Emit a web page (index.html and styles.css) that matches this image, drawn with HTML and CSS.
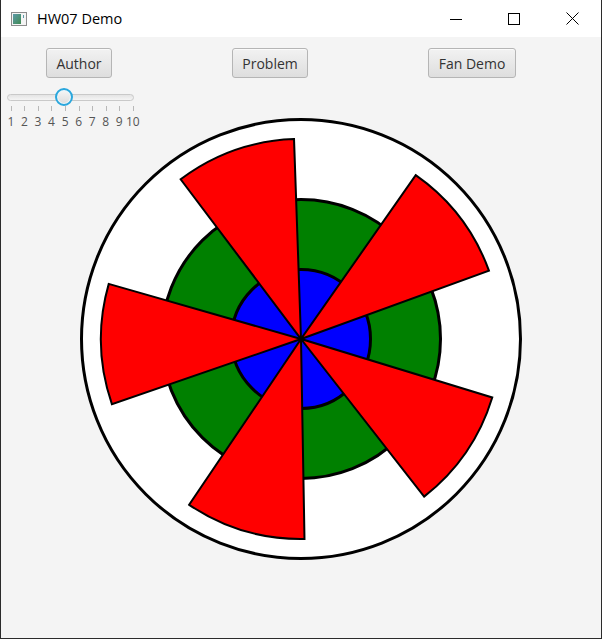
FILE: index.html
```html
<!DOCTYPE html>
<html>
<head>
<meta charset="utf-8">
<link rel="stylesheet" href="styles.css">
</head>
<body>
<div class="window">
  <div class="titlebar">
    <svg class="appicon" width="16" height="14" viewBox="0 0 16 14">
      <rect x="0.5" y="0.5" width="15" height="13" fill="#f4f4f4" stroke="#8c8c8c"/>
      <defs><linearGradient id="g" x1="0" y1="0" x2="1" y2="1"><stop offset="0" stop-color="#5d9aa8"/><stop offset="1" stop-color="#3f8a52"/></linearGradient></defs>
      <rect x="2" y="2" width="8" height="10" fill="url(#g)"/>
      <rect x="12" y="3" width="1" height="3" fill="#5d9aa8"/>
    </svg>
    <span class="title">HW07 Demo</span>
    <div class="controls">
      <div class="cbtn"><svg width="12" height="12" viewBox="0 0 12 12"><line x1="0" y1="6.5" x2="12" y2="6.5" stroke="#000" stroke-width="1"/></svg></div>
      <div class="cbtn"><svg width="12" height="12" viewBox="0 0 12 12"><rect x="0.5" y="0.5" width="11" height="11" fill="none" stroke="#000" stroke-width="1"/></svg></div>
      <div class="cbtn"><svg width="13" height="13" viewBox="0 0 13 13"><path d="M0.5 0.5 L12.5 12.5 M12.5 0.5 L0.5 12.5" stroke="#000" stroke-width="1" fill="none"/></svg></div>
    </div>
  </div>
  <div class="content">
    <div class="buttons">
      <button class="btn b-author">Author</button>
      <button class="btn b-problem">Problem</button>
      <button class="btn b-fan">Fan Demo</button>
    </div>
    <div class="stage">
      <svg class="fan" width="600" height="560" viewBox="1 78 600 560">
        <circle cx="301" cy="339" r="219.5" fill="#fff" stroke="#000" stroke-width="3"/>
        <circle cx="301" cy="339" r="139.5" fill="#008000" stroke="#000" stroke-width="3"/>
        <circle cx="301" cy="339" r="69.5" fill="#0000ff" stroke="#000" stroke-width="3"/>
        <g fill="#ff0000" stroke="#000" stroke-width="2" stroke-linejoin="miter">
          <path d="M301 339 L488.94 270.60 A200 200 0 0 0 415.72 175.17 Z"/>
          <path d="M301 339 L294.02 139.12 A200 200 0 0 0 180.64 179.27 Z"/>
          <path d="M301 339 L108.75 283.87 A200 200 0 0 0 111.90 404.11 Z"/>
          <path d="M301 339 L189.16 504.81 A200 200 0 0 0 304.49 538.97 Z"/>
          <path d="M301 339 L424.13 496.60 A200 200 0 0 0 492.26 397.47 Z"/>
        </g>
      </svg>
      <div class="slider">
        <div class="track"><div class="thumb"></div></div>
        <div class="ticks">
          <span>1</span><span>2</span><span>3</span><span>4</span><span>5</span><span>6</span><span>7</span><span>8</span><span>9</span><span>10</span>
        </div>
      </div>
    </div>
  </div>
</div>
</body>
</html>
```

FILE: styles.css
```css
html, body {
  margin: 0;
  padding: 0;
  background: #f4f4f4;
}
.window {
  width: 602px;
  height: 639px;
  box-sizing: border-box;
  border: 1px solid #2b2b2b;
  border-top: none;
  display: flex;
  flex-direction: column;
  font-family: "Open Sans", "Noto Sans", sans-serif;
  overflow: hidden;
}
.titlebar {
  height: 37px;
  flex: none;
  background: #fff;
  display: flex;
  align-items: center;
}
.appicon {
  margin-left: 10px;
}
.title {
  margin-left: 10px;
  font-size: 14.5px;
  color: #000;
  font-family: "Open Sans", sans-serif;
}
.controls {
  margin-left: auto;
  display: flex;
  height: 37px;
}
.cbtn {
  width: 58px;
  height: 37px;
  display: flex;
  align-items: center;
  justify-content: center;
}
.content {
  flex: 1;
  background: #f4f4f4;
  display: flex;
  flex-direction: column;
}
.buttons {
  display: flex;
  padding-top: 11px;
  padding-left: 45px;
  height: 30px;
  flex: none;
}
.btn {
  height: 30px;
  box-sizing: border-box;
  border: 1px solid #b5b5b5;
  border-radius: 3px;
  background: linear-gradient(#f2f2f2, #dedede);
  font-family: "Open Sans", sans-serif;
  font-size: 14px;
  color: #333;
  padding: 0;
  box-shadow: inset 0 1px 0 #fafafa;
}
.b-author { width: 66px; }
.b-problem { width: 76px; margin-left: 120px; }
.b-fan { width: 88px; margin-left: 120px; }
.stage {
  display: grid;
  flex: 1;
}
.fan, .slider {
  grid-area: 1 / 1;
}
.fan {
  display: block;
}
.slider {
  align-self: start;
  justify-self: start;
  margin-top: 16px;
  margin-left: 3px;
  width: 136px;
}
.track {
  position: relative;
  margin: 0 6px 0 3px;
  height: 7px;
  box-sizing: border-box;
  border: 1px solid #c9c9c9;
  border-radius: 4px;
  background: linear-gradient(#e4e4e4, #f4f4f4);
}
.thumb {
  position: absolute;
  left: 47px;
  top: -7px;
  width: 18px;
  height: 18px;
  box-sizing: border-box;
  border-radius: 50%;
  border: 2px solid #2aa7dd;
  background: linear-gradient(#f6f6f6, #dcdcdc);
  box-shadow: inset 0 0 0 1px #e9f6fc;
}
.ticks {
  display: grid;
  grid-template-columns: repeat(10, 13.56px);
  margin-top: 5px;
}
.ticks span {
  position: relative;
  text-align: center;
  font-family: "Open Sans", sans-serif;
  font-size: 12px;
  line-height: 14px;
  color: #555;
  padding-top: 9px;
  white-space: nowrap;
  letter-spacing: -0.2px;
}
.ticks span::before {
  content: "";
  position: absolute;
  top: 0;
  left: 50%;
  width: 1px;
  height: 5px;
  background: #b8b8b8;
}
```
